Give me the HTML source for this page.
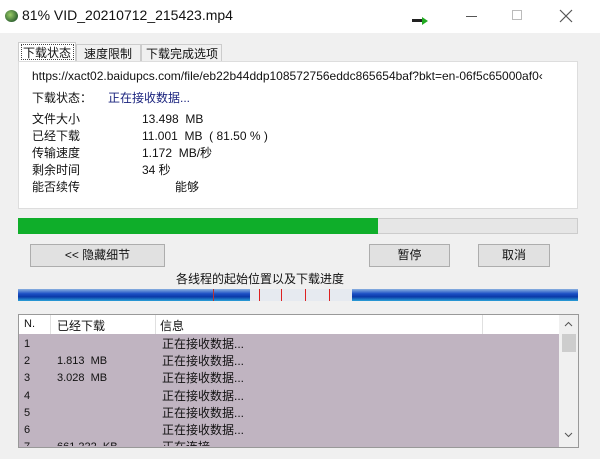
<!DOCTYPE html>
<html><head><meta charset="utf-8"><style>
*{margin:0;padding:0;box-sizing:border-box}
body{width:600px;height:459px;background:#f0f0f0;position:relative;overflow:hidden;font-family:"Liberation Sans","Noto Sans CJK SC",sans-serif;font-size:12px;color:#111}
.a{position:absolute;white-space:nowrap}
.btn{position:absolute;background:#e1e1e1;border:1px solid #adadad;text-align:center;font-size:12px}
</style></head><body>
<div class="a" style="left:0;top:0;width:600px;height:33px;background:#fff"></div>
<div class="a" style="left:5px;top:10px;width:13px;height:12px;border-radius:50%;background:radial-gradient(circle at 40% 40%,#9c6,#363 70%)"></div>
<div class="a" style="left:22px;top:7px;font-size:14px">81% VID_20210712_215423.mp4</div>
<div class="a" style="left:412px;top:19px;width:12px;height:3px;background:#222"></div>
<div class="a" style="left:422px;top:17px;width:0;height:0;border-left:6px solid #2a2;border-top:4px solid transparent;border-bottom:4px solid transparent"></div>
<div class="a" style="left:466px;top:16px;width:11px;height:1px;background:#555"></div>
<div class="a" style="left:512px;top:10px;width:10px;height:10px;border:1px solid #bbb"></div>
<svg class="a" style="left:559px;top:9px" width="14" height="14"><path d="M1 1L13 13M13 1L1 13" stroke="#555" stroke-width="1.2"/></svg>

<div class="a" style="left:18px;top:42px;width:58px;height:20px;background:#fff;border:1px solid #ccc;border-bottom:none"></div>
<div class="a" style="left:21px;top:44px;width:53px;height:16px;border:1px dotted #444"></div>
<div class="a" style="left:23px;top:44px;font-size:12px">下载状态</div>
<div class="a" style="left:76px;top:44px;width:65px;height:18px;border:1px solid #ccc;border-bottom:none"></div>
<div class="a" style="left:84px;top:45px">速度限制</div>
<div class="a" style="left:141px;top:44px;width:81px;height:18px;border:1px solid #ccc;border-bottom:none"></div>
<div class="a" style="left:146px;top:45px">下载完成选项</div>
<div class="a" style="left:18px;top:61px;width:560px;height:148px;background:#fff;border:1px solid #ddd"></div>
<div class="a" style="left:32px;top:69px;font-size:12px">https://xact02.baidupcs.com/file/eb22b44ddp108572756eddc865654baf?bkt=en-06f5c65000af0‹</div>
<div class="a" style="left:32px;top:89px">下载状态：</div>
<div class="a" style="left:108px;top:89px;color:#1a237e">正在接收数据...</div>
<div class="a" style="left:32px;top:111px;line-height:17px">文件大小<br>已经下载<br>传输速度<br>剩余时间<br>能否续传</div>
<div class="a" style="left:142px;top:111px;line-height:17px">13.498&nbsp; MB<br>11.001&nbsp; MB &nbsp;( 81.50 % )<br>1.172&nbsp; MB/秒<br>34 秒<br><span style="margin-left:33px">能够</span></div>

<div class="a" style="left:18px;top:218px;width:560px;height:16px;background:#e6e6e6;border:1px solid #ccc"></div>
<div class="a" style="left:18px;top:218px;width:360px;height:16px;background:#0fae2a"></div>

<div class="btn" style="left:30px;top:244px;width:135px;height:23px;line-height:21px">&lt;&lt; 隐藏细节</div>
<div class="btn" style="left:369px;top:244px;width:81px;height:23px;line-height:21px">暂停</div>
<div class="btn" style="left:478px;top:244px;width:72px;height:23px;line-height:21px">取消</div>
<div class="a" style="left:176px;top:270px">各线程的起始位置以及下载进度</div>
<div class="a" style="left:18px;top:289px;width:560px;height:12px;background:linear-gradient(#8ab0e0,#1b4fc4 40%,#0b3aa8 65%,#2aa0d8)"></div>
<div class="a" style="left:250px;top:289px;width:102px;height:12px;background:#e6eaf0"></div>
<div class="a" style="left:213px;top:289px;width:1px;height:12px;background:#b33"></div>
<div class="a" style="left:259px;top:289px;width:1px;height:12px;background:#d22"></div>
<div class="a" style="left:281px;top:289px;width:1px;height:12px;background:#d22"></div>
<div class="a" style="left:305px;top:289px;width:1px;height:12px;background:#d22"></div>
<div class="a" style="left:329px;top:289px;width:1px;height:12px;background:#d22"></div>

<div class="a" style="left:18px;top:314px;width:561px;height:134px;background:#c0b4c1;border:1px solid #999"></div>
<div class="a" style="left:19px;top:315px;width:540px;height:19px;background:#fff"></div>
<div class="a" style="left:50px;top:315px;width:1px;height:19px;background:#e0e0e0"></div>
<div class="a" style="left:155px;top:315px;width:1px;height:19px;background:#e0e0e0"></div>
<div class="a" style="left:482px;top:315px;width:1px;height:19px;background:#e0e0e0"></div>
<div class="a" style="left:24px;top:318px;font-size:11px">N.</div>
<div class="a" style="left:57px;top:317px">已经下载</div>
<div class="a" style="left:160px;top:317px">信息</div>
<div class="a" style="left:559px;top:315px;width:19px;height:132px;background:#f0f0f0"></div>
<div class="a" style="left:562px;top:334px;width:14px;height:18px;background:#cdcdcd"></div>
<svg class="a" style="left:564px;top:321px" width="9" height="6"><path d="M1 5L4.5 1.5L8 5" stroke="#555" fill="none"/></svg>
<svg class="a" style="left:564px;top:432px" width="9" height="6"><path d="M1 1L4.5 4.5L8 1" stroke="#555" fill="none"/></svg>
<div class="a" style="left:24px;top:336px;line-height:17.2px;font-size:11px;height:110px;overflow:hidden">1<br>2<br>3<br>4<br>5<br>6<br>7</div>
<div class="a" style="left:57px;top:336px;line-height:17.2px;font-size:11px;height:110px;overflow:hidden"><br>1.813&nbsp; MB<br>3.028&nbsp; MB<br><br><br><br>661.222&nbsp; KB</div>
<div class="a" style="left:162px;top:336px;line-height:17.2px;font-size:12px;height:110px;overflow:hidden">正在接收数据...<br>正在接收数据...<br>正在接收数据...<br>正在接收数据...<br>正在接收数据...<br>正在接收数据...<br>正在连接...</div>
</body></html>
